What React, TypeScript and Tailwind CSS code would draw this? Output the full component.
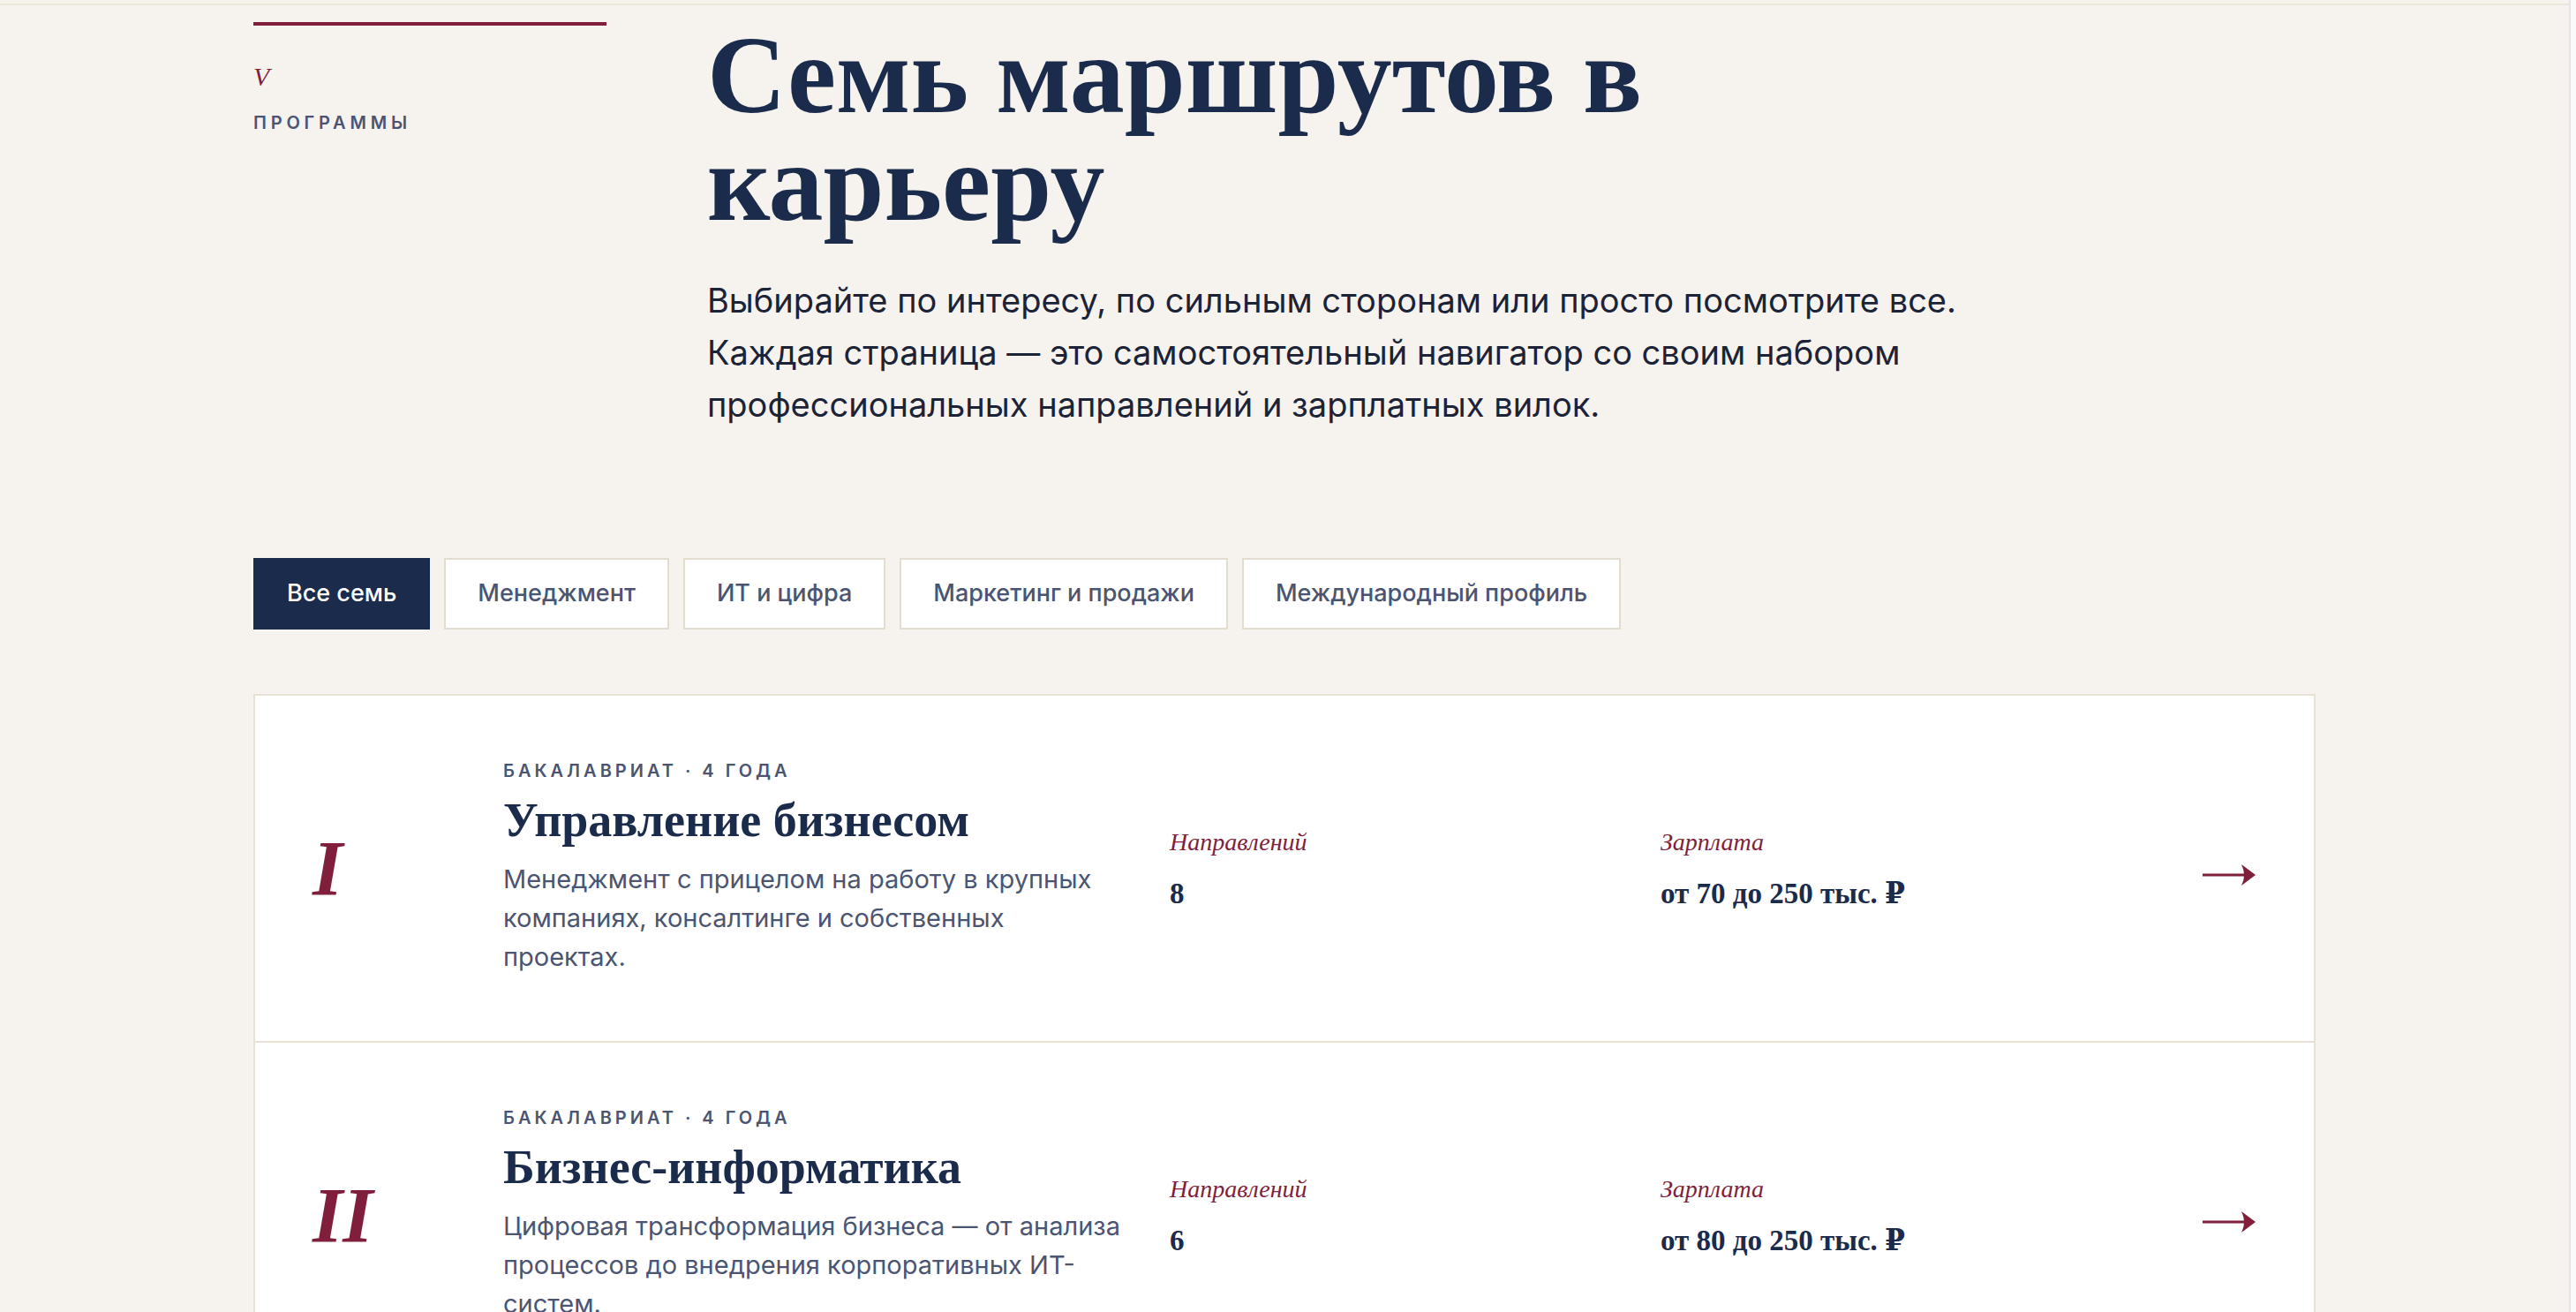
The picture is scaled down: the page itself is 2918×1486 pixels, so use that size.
import React from "react";

const serif = "font-['Liberation_Serif','DejaVu_Serif',serif]";

type Program = {
  num: string;
  meta: string;
  title: string;
  desc: string;
  count: string;
  salary: string;
};

const programs: Program[] = [
  {
    num: "I",
    meta: "Бакалавриат · 4 года",
    title: "Управление бизнесом",
    desc: "Менеджмент с прицелом на работу в крупных компаниях, консалтинге и собственных проектах.",
    count: "8",
    salary: "от 70 до 250 тыс. ₽",
  },
  {
    num: "II",
    meta: "Бакалавриат · 4 года",
    title: "Бизнес-информатика",
    desc: "Цифровая трансформация бизнеса — от анализа процессов до внедрения корпоративных ИТ-систем.",
    count: "6",
    salary: "от 80 до 250 тыс. ₽",
  },
  {
    num: "III",
    meta: "Бакалавриат · 4 года",
    title: "Маркетинг",
    desc: "Исследования рынка, бренд-менеджмент и цифровые коммуникации для компаний любого масштаба.",
    count: "7",
    salary: "от 60 до 220 тыс. ₽",
  },
];

const tabs = ["Все семь", "Менеджмент", "ИТ и цифра", "Маркетинг и продажи", "Международный профиль"];

function Arrow() {
  return (
    <svg width="60" height="24" viewBox="0 0 60 24" className="block">
      <rect x="0" y="10.5" width="52" height="3" fill="#7f1f3c" />
      <path d="M44 0 L60 12 L44 24 Q50 12 44 0 Z" fill="#7f1f3c" />
    </svg>
  );
}

function Row({ p, first }: { p: Program; first: boolean }) {
  return (
    <div className={`flex items-center py-[73px] pl-[65px] pr-[66px] ${first ? "" : "border-t-2 border-[#e8e2d6]"}`}>
      <div className="w-[216px] shrink-0">
        <span className={`${serif} text-[88px] leading-[88px] font-bold italic text-[#7f1f3c]`}>{p.num}</span>
      </div>
      <div className="w-[755px] shrink-0">
        <div className="w-[708px]">
          <div className="font-['Inter',sans-serif] text-[20px] leading-[24px] font-semibold uppercase tracking-[0.2em] text-[#4b5572]">
            {p.meta}
          </div>
          <div className={`${serif} mt-[14px] text-[54px] leading-[60px] font-bold text-[#1b2b4b]`}>{p.title}</div>
          <div className="mt-[15px] font-['Inter',sans-serif] text-[29px] leading-[44px] text-[#4b5572]">{p.desc}</div>
        </div>
      </div>
      <div className="w-[556px] shrink-0">
        <div className={`${serif} text-[28px] leading-[34px] italic text-[#7f1f3c]`}>Направлений</div>
        <div className={`${serif} mt-[22px] text-[33px] leading-[38px] font-bold text-[#1b2b4b]`}>{p.count}</div>
      </div>
      <div className="shrink-0">
        <div className={`${serif} text-[28px] leading-[34px] italic text-[#7f1f3c]`}>Зарплата</div>
        <div className={`${serif} mt-[22px] text-[33px] leading-[38px] font-bold text-[#1b2b4b]`}>{p.salary}</div>
      </div>
      <div className="ml-auto mt-[14px]">
        <Arrow />
      </div>
    </div>
  );
}

export default function App() {
  return (
    <div className="flex h-[1486px] w-[2918px] overflow-hidden bg-[#f6f3ee]">
      <div className="w-[2910px] shrink-0">
        <div className="mt-[4px] h-[2px] bg-[#ebe5da]" />
        <section className="pl-[287px] pt-[19px]">
          <div className="flex">
            <div className="w-[514px] shrink-0">
              <div className="h-[4px] w-[400px] bg-[#7f1f3c]" />
              <div className={`${serif} mt-[43px] text-[30px] leading-[30px] italic text-[#7f1f3c]`}>V</div>
              <div className="mt-[27px] font-['Inter',sans-serif] text-[20px] leading-[20px] font-semibold tracking-[0.24em] text-[#4b5572]">
                ПРОГРАММЫ
              </div>
            </div>
            <div>
              <h1 className={`${serif} w-[1400px] text-[124px] leading-[122px] font-bold text-[#1b2b4b]`}>
                Семь маршрутов в карьеру
              </h1>
              <p className="mt-[42px] w-[1480px] font-['Inter',sans-serif] text-[38px] leading-[59px] text-[#1c2337]">
                Выбирайте по интересу, по сильным сторонам или просто посмотрите все. Каждая страница — это
                самостоятельный навигатор со своим набором профессиональных направлений и зарплатных вилок.
              </p>
            </div>
          </div>

          <div className="mt-[144px] flex gap-[16px]">
            {tabs.map((t, i) => (
              <div
                key={t}
                className={`flex h-[81px] items-center border-2 px-[36px] font-['Inter',sans-serif] text-[27px] font-medium ${
                  i === 0 ? "border-[#1b2b4b] bg-[#1b2b4b] text-white" : "border-[#e3ddd0] bg-white text-[#4b5572]"
                }`}
              >
                {t}
              </div>
            ))}
          </div>

          <div className="mt-[73px] w-[2336px] border-2 border-[#e8e2d6] bg-white">
            {programs.map((p, i) => (
              <Row key={p.num} p={p} first={i === 0} />
            ))}
          </div>
        </section>
      </div>
      <div className="w-[8px] shrink-0 border-l-2 border-[#e4e4e4] bg-[#fafafa]" />
    </div>
  );
}
